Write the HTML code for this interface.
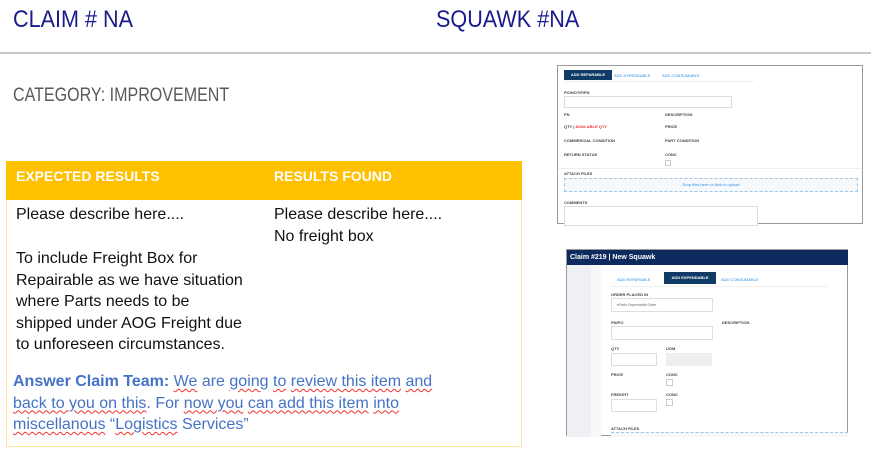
<!DOCTYPE html>
<html><head><meta charset="utf-8"><style>
*{margin:0;padding:0;box-sizing:border-box}
body{width:871px;height:456px;background:#fff;position:relative;overflow:hidden;font-family:"Liberation Sans",sans-serif}
.a{position:absolute;white-space:nowrap}
.t{font-family:"Liberation Sans Narrow","Liberation Sans",sans-serif;color:#1a1a8c;font-size:24px;}
.s{font-size:4px;color:#444;font-weight:bold}
.bx{position:absolute;border:1px solid #ccc;background:#fff}
.body{font-size:16px;color:#111;line-height:21.5px}
.ans{color:#4472C4;font-size:16px;line-height:21.5px}
.ans u{text-decoration:underline wavy #e33;text-decoration-thickness:1px;text-underline-offset:2px}
</style></head><body>
<div class="a t" style="left:13px;top:6px;transform:scaleX(.9);transform-origin:left">CLAIM # NA</div>
<div class="a t" style="left:436px;top:6px;transform:scaleX(.9);transform-origin:left">SQUAWK #NA</div>
<div class="a" style="left:0;top:52px;width:871px;height:2px;background:#c8c8c8"></div>
<div class="a" style="left:13px;top:85px;font-family:'Liberation Sans Narrow','Liberation Sans',sans-serif;font-size:19px;color:#5a5a5a;transform:scaleX(.845);transform-origin:left">CATEGORY: IMPROVEMENT</div>

<div class="a" style="left:6px;top:161px;width:516px;height:286px;border:1px solid #FFE699"></div>
<div class="a" style="left:6px;top:161px;width:516px;height:39px;background:#FFC000"></div>
<div class="a" style="left:16px;top:168px;color:#fff;font-weight:bold;font-size:14px">EXPECTED RESULTS</div>
<div class="a" style="left:274px;top:168px;color:#fff;font-weight:bold;font-size:14px">RESULTS FOUND</div>
<div class="a body" style="left:16px;top:204px">Please describe here....</div>
<div class="a body" style="left:16px;top:248px">To include Freight Box for<br>Repairable as we have situation<br>where Parts needs to be<br>shipped under AOG Freight due<br>to unforeseen circumstances.</div>
<div class="a body" style="left:274px;top:204px">Please describe here....<br>No freight box</div>
<div class="a ans" style="left:13px;top:371px"><b>Answer Claim Team:</b> <u>We</u> are <u>going</u> <u>to</u> <u>review this item</u> <u>and</u><br><u>back to you on this</u>. For <u>now you</u> <u>can add this item</u> <u>into</u><br><u>miscellanous</u> “<u>Logistics</u> Services”</div>

<!-- screenshot 1 -->
<div class="bx" style="left:557px;top:65px;width:306px;height:159px;border-color:#999">
 <div class="a" style="left:6px;top:4px;width:48px;height:10px;background:#0f3b66;color:#fff;font-size:4px;font-weight:bold;line-height:10px;text-align:center">ADD REPARABLE</div>
 <div class="a" style="left:56px;top:7px;font-size:4px;color:#2a8be0">ADD EXPENDABLE</div>
 <div class="a" style="left:104px;top:7px;font-size:4px;color:#2a8be0">ADD CONSUMABLE</div>
 <div class="a" style="left:6px;top:15px;width:190px;height:1px;background:#eee"></div>
 <div class="a s" style="left:6px;top:24px">PO/NOTIF/PN</div>
 <div class="bx" style="left:6px;top:30px;width:168px;height:12px;border-color:#ddd"></div>
 <div class="a s" style="left:6px;top:46px">PN</div><div class="a s" style="left:107px;top:46px">DESCRIPTION</div>
 <div class="a s" style="left:6px;top:58px">QTY | <span style="color:#e33">AVAILABLE QTY</span></div><div class="a s" style="left:107px;top:58px">PRICE</div>
 <div class="a s" style="left:6px;top:72px">COMMERCIAL CONDITION</div><div class="a s" style="left:107px;top:72px">PART CONDITION</div>
 <div class="a s" style="left:6px;top:86px">RETURN STATUS</div><div class="a s" style="left:107px;top:86px">CONC</div>
 <div class="bx" style="left:107px;top:94px;width:6px;height:6px"></div>
 <div class="a" style="left:0;top:102px;width:304px;height:1px;background:#eee"></div>
 <div class="a s" style="left:6px;top:105px">ATTACH FILES</div>
 <div class="a" style="left:6px;top:112px;width:294px;height:14px;border:1px dashed #9cc6e8;background:#f6f9fc;font-size:4px;color:#2a8be0;text-align:center;line-height:12px">Drop files here or click to upload</div>
 <div class="a s" style="left:6px;top:134px">COMMENTS</div>
 <div class="bx" style="left:6px;top:140px;width:194px;height:20px;border-color:#ddd"></div>
</div>

<!-- screenshot 2 -->
<div class="bx" style="left:566px;top:249px;width:282px;height:187px;border-color:#999">
 <div class="a" style="left:0;top:0;width:281px;height:15px;background:#0d2a5e;color:#fff;font-size:7px;font-weight:bold;line-height:15px;padding-left:3px">Claim #219 | New Squawk</div>
 <div class="a" style="left:0;top:15px;width:24px;height:172px;background:#eef0f3"></div>
 <div class="a" style="left:24px;top:15px;width:10px;height:172px;background:#f7f8fa"></div>
 <div class="a" style="left:50px;top:27px;font-size:4px;color:#2a8be0">ADD REPARABLE</div>
 <div class="a" style="left:97px;top:22px;width:52px;height:12px;background:#0f3b66;color:#fff;font-size:4px;font-weight:bold;line-height:12px;text-align:center">ADD EXPENDABLE</div>
 <div class="a" style="left:154px;top:27px;font-size:4px;color:#2a8be0">ADD CONSUMABLE</div>
 <div class="a" style="left:44px;top:36px;width:216px;height:1px;background:#eee"></div>
 <div class="a s" style="left:44px;top:42px">ORDER PLACED IN</div>
 <div class="bx" style="left:44px;top:48px;width:102px;height:14px;border-color:#ddd;font-size:3.5px;color:#666;padding:4px 5px">eParts Expendable Order</div>
 <div class="a s" style="left:44px;top:70px">PN/PO</div><div class="a s" style="left:155px;top:70px">DESCRIPTION</div>
 <div class="bx" style="left:44px;top:76px;width:102px;height:14px;border-color:#ddd"></div>
 <div class="a s" style="left:44px;top:96px">QTY</div><div class="a s" style="left:99px;top:96px">UOM</div>
 <div class="bx" style="left:44px;top:103px;width:46px;height:13px;border-color:#ddd"></div>
 <div class="a" style="left:99px;top:103px;width:46px;height:13px;background:#eee"></div>
 <div class="a s" style="left:44px;top:122px">PRICE</div><div class="a s" style="left:99px;top:122px">CONC</div>
 <div class="bx" style="left:99px;top:129px;width:7px;height:7px"></div>
 <div class="a s" style="left:44px;top:142px">FREIGHT</div><div class="a s" style="left:99px;top:142px">CONC</div>
 <div class="bx" style="left:44px;top:149px;width:46px;height:13px;border-color:#ddd"></div>
 <div class="bx" style="left:99px;top:149px;width:7px;height:7px"></div>
 <div class="a s" style="left:44px;top:176px">ATTACH FILES</div>
 <div class="a" style="left:44px;top:182px;width:237px;height:5px;border-top:1px dashed #9cc6e8;background:#f6f9fc"></div>
</div>
</body></html>
